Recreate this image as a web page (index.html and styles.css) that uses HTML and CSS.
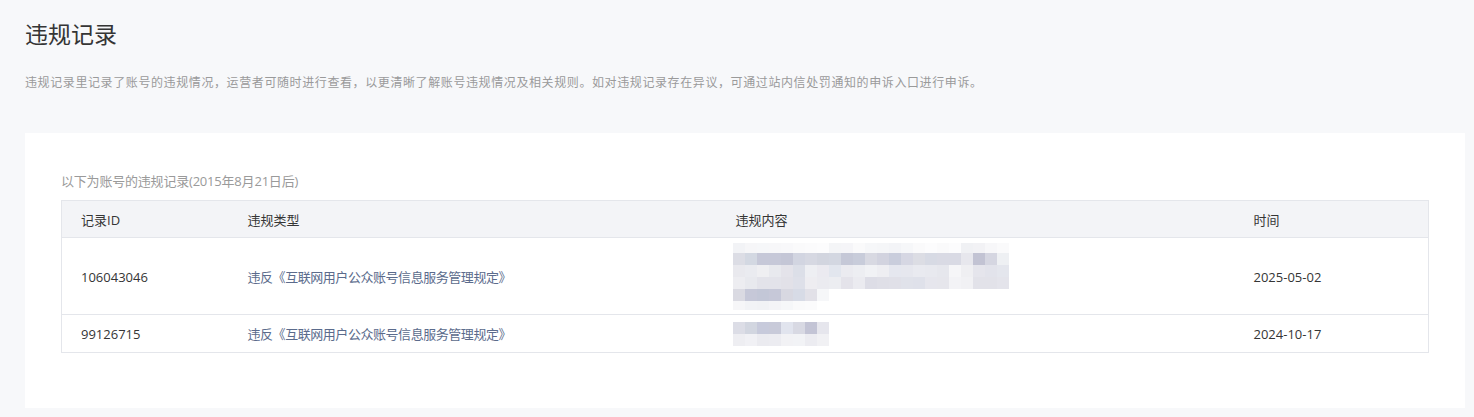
FILE: index.html
```html
<!DOCTYPE html>
<html lang="zh-CN">
<head>
<meta charset="utf-8">
<title>违规记录</title>
<link rel="stylesheet" href="styles.css">
</head>
<body>
<div class="page">
  <h1 class="title">违规记录</h1>
  <p class="desc">违规记录里记录了账号的违规情况，运营者可随时进行查看，以更清晰了解账号违规情况及相关规则。如对违规记录存在异议，可通过站内信处罚通知的申诉入口进行申诉。</p>
  <div class="card">
    <p class="sub">以下为账号的违规记录(2015年8月21日后)</p>
    <table class="tbl">
      <colgroup>
        <col class="c1"><col class="c2"><col class="c3"><col class="c4">
      </colgroup>
      <thead>
        <tr><th>记录ID</th><th>违规类型</th><th>违规内容</th><th>时间</th></tr>
      </thead>
      <tbody>
        <tr class="tall">
          <td>106043046</td>
          <td class="link">违反《互联网用户公众账号信息服务管理规定》</td>
          <td><div class="mosaic" data-set="a"></div></td>
          <td>2025-05-02</td>
        </tr>
        <tr>
          <td>99126715</td>
          <td class="link">违反《互联网用户公众账号信息服务管理规定》</td>
          <td><div class="mosaic" data-set="b"></div></td>
          <td>2024-10-17</td>
        </tr>
      </tbody>
    </table>
  </div>
</div>
<script src="script.js"></script>
</body>
</html>
```

FILE: styles.css
```css
* { box-sizing: border-box; }
html, body { margin: 0; padding: 0; }
body {
  background: #f7f8fa;
  font-family: "Open Sans", "Noto Sans CJK SC", sans-serif;
  color: #353535;
}
.page {
  padding: 17px 9px 10px 25px;
}
.title {
  margin: 0;
  font-size: 23px;
  line-height: 32px;
  font-weight: 400;
  color: #353535;
  font-family: "Noto Sans CJK SC", sans-serif;
}
.desc {
  margin: 24px 0 0;
  font-size: 12px;
  letter-spacing: 0.6px;
  line-height: 20px;
  color: #9a9a9a;
}
.card {
  margin-top: 40px;
  background: #fff;
  padding: 38px 36px 55px;
}
.sub {
  margin: 0 0 9px;
  font-size: 13px;
  letter-spacing: -0.2px;
  line-height: 20px;
  color: #9a9a9a;
}
.tbl {
  width: 100%;
  border-collapse: collapse;
  table-layout: fixed;
  border: 1px solid #e4e6eb;
  font-size: 13px;
}
.c1 { width: 167px; }
.c2 { width: 488px; }
.c3 { width: 518px; }
.c4 { width: auto; }
.tbl th {
  background: #f3f4f7;
  font-weight: 400;
  text-align: left;
  height: 37px;
  padding: 0 19px;
  color: #353535;
  border-bottom: 1px solid #e4e6eb;
}
.tbl td {
  height: 38px;
  padding: 0 19px;
  border-bottom: 1px solid #e4e6eb;
  color: #353535;
  vertical-align: middle;
  white-space: nowrap;
}
.tbl .tall td { padding-top: 5px; padding-bottom: 4px; }
.tbl td.link { color: #5b6b8c; letter-spacing: -0.45px; }
.mosaic {
  margin-left: -3px;
  display: flex;
  flex-direction: column;
}
.mrow { display: flex; }
.mrow span { width: 12px; flex: none; }
.h10 span { height: 10px; }
.h12 span { height: 12px; }
.h9 span { height: 9px; }
```

FILE: script.js
```js
(function () {
  var sets = {
    a: [
      ["h10", ["#f2f3f6","#f6f6f8","#f6f7f9","#f7f7f9","#f8f8fa","#fafafb","#fbfbfc","#fcfcfd","#f4f5f7","#f5f5f8","#fafafb","#f6f7f9","#f5f6f8","#f3f4f7","#f6f7f9","#fafafb","#fcfcfd","#fafafb","#fcfcfd","#f0f1f4","#f2f2f5","#f7f7f9","#fafafb"]],
      ["h12", ["#dcdde5","#d3d8e2","#c6c8d8","#c6c8d8","#c4c6d6","#d2d5e1","#d6d8e2","#d2d5df","#d3d7e1","#c5c8d7","#c8ccda","#d8d9e2","#d2d3df","#c9cddc","#d6d7e3","#dcdde4","#d7dae4","#d9dae4","#d9dae4","#e7e7ed","#c2c3d3","#d5d6e1","#eef0f3"]],
      ["h12", ["#e9e9ee","#eaebf0","#efeff2","#e8e9ee","#e4e3ea","#dcdfe8","#eeeff3","#ebeaf0","#e2e6ee","#ebebf0","#edeef2","#f1f2f5","#eeeef2","#e5e7ef","#e6e7ee","#e9eaf0","#e8e9ef","#e6e7ed","#f6f6f8","#efeff2","#e5e5ec","#e2e3eb","#e4e6ed"]],
      ["h12", ["#ededf1","#e8e9ee","#e3e3ea","#e3e3ea","#e2e1e8","#dee0e9","#eeedf1","#ebebf0","#ecedf1","#e4e3ea","#ebebf0","#dddde6","#dfdfe7","#e0e0e8","#e0e2ea","#dfe1ea","#e6e6ed","#e6e6ec","#f3f3f6","#f1f1f4","#e2e2e9","#e2e2e9","#e4e4eb"]],
      ["h12", ["#dadae2","#c6c8d8","#c3c7d7","#c6c8d8","#d8d8e1","#d7dbe6","#e2e1e8","#f6f7f9"]],
      ["h9", ["#f6f6f8","#f2f3f6","#f1f2f5","#f4f4f7","#f6f7f9","#fafafb","#fbfbfc"]]
    ],
    b: [
      ["h12", ["#dcdde6","#d2d6e0","#c7cadb","#c8cad9","#e1e4ee","#d8d9e3","#c3c4d5","#e6e6ed"]],
      ["h12", ["#eeeef2","#f1f1f5","#ebebf0","#ececf1","#f2f2f5","#f2f3f6","#ececf1","#f1f1f4"]]
    ]
  };
  document.querySelectorAll(".mosaic").forEach(function (m) {
    var rows = sets[m.getAttribute("data-set")];
    rows.forEach(function (r) {
      var row = document.createElement("div");
      row.className = "mrow " + r[0];
      r[1].forEach(function (c) {
        var s = document.createElement("span");
        s.style.background = c;
        row.appendChild(s);
      });
      m.appendChild(row);
    });
  });
})();
```
